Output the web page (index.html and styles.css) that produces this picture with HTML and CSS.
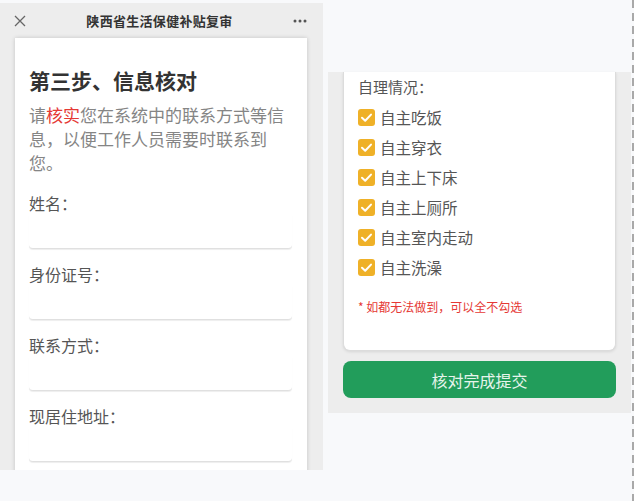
FILE: index.html
```html
<!DOCTYPE html>
<html lang="zh-CN">

<head>
    <meta charset="UTF-8">
    <meta name="viewport" content="width=device-width, initial-scale=1.0">
    <title>信息核对</title>
    <link rel="stylesheet" href="styles.css">
</head>

<body>
    <div class="screens">
        <!-- step 3: contact info -->
        <div class="phone phone-left">
            <div class="nav-bar">
                <svg class="nav-close" width="12" height="12" viewBox="0 0 12 12">
                    <path d="M1 1 L11 11 M11 1 L1 11" stroke="#666" stroke-width="1.3" fill="none" />
                </svg>
                <span class="nav-title">陕西省生活保健补贴复审</span>
                <svg class="nav-more" width="14" height="4" viewBox="0 0 14 4">
                    <circle cx="2" cy="2" r="1.5" fill="#555" />
                    <circle cx="7" cy="2" r="1.5" fill="#555" />
                    <circle cx="12" cy="2" r="1.5" fill="#555" />
                </svg>
            </div>
            <div class="card">
                <h2 class="step-title">第三步、信息核对</h2>
                <p class="step-desc">请<span class="hl">核实</span>您在系统中的联系方式等信息，以便工作人员需要时联系到您。</p>

                <form id="contactForm">
                    <label for="userName">姓名：</label>
                    <input type="text" id="userName" name="userName">

                    <label for="idNumber">身份证号：</label>
                    <input type="text" id="idNumber" name="idNumber">

                    <label for="phone">联系方式：</label>
                    <input type="text" id="phone" name="phone">

                    <label for="address">现居住地址：</label>
                    <input type="text" id="address" name="address">
                </form>
            </div>
        </div>

        <!-- self care + submit -->
        <div class="phone phone-right">
            <div class="card card-check">
                <div class="check-title">自理情况：</div>
                <div class="check-row"><span class="box"><svg width="17" height="17" viewBox="0 0 17 17"><path d="M4 8.8 L7.2 11.8 L13 5.6" stroke="#fff" stroke-width="2" fill="none" stroke-linecap="round" stroke-linejoin="round" /></svg></span>自主吃饭</div>
                <div class="check-row"><span class="box"><svg width="17" height="17" viewBox="0 0 17 17"><path d="M4 8.8 L7.2 11.8 L13 5.6" stroke="#fff" stroke-width="2" fill="none" stroke-linecap="round" stroke-linejoin="round" /></svg></span>自主穿衣</div>
                <div class="check-row"><span class="box"><svg width="17" height="17" viewBox="0 0 17 17"><path d="M4 8.8 L7.2 11.8 L13 5.6" stroke="#fff" stroke-width="2" fill="none" stroke-linecap="round" stroke-linejoin="round" /></svg></span>自主上下床</div>
                <div class="check-row"><span class="box"><svg width="17" height="17" viewBox="0 0 17 17"><path d="M4 8.8 L7.2 11.8 L13 5.6" stroke="#fff" stroke-width="2" fill="none" stroke-linecap="round" stroke-linejoin="round" /></svg></span>自主上厕所</div>
                <div class="check-row"><span class="box"><svg width="17" height="17" viewBox="0 0 17 17"><path d="M4 8.8 L7.2 11.8 L13 5.6" stroke="#fff" stroke-width="2" fill="none" stroke-linecap="round" stroke-linejoin="round" /></svg></span>自主室内走动</div>
                <div class="check-row"><span class="box"><svg width="17" height="17" viewBox="0 0 17 17"><path d="M4 8.8 L7.2 11.8 L13 5.6" stroke="#fff" stroke-width="2" fill="none" stroke-linecap="round" stroke-linejoin="round" /></svg></span>自主洗澡</div>
                <p class="check-note">* 如都无法做到，可以全不勾选</p>
            </div>
            <button class="submit-btn" type="button">核对完成提交</button>
        </div>

        <div class="dash-line"></div>
    </div>
</body>

</html>
```

FILE: styles.css
```css
body {
    margin: 0;
    font-family: "Noto Sans CJK SC", "Noto Sans", sans-serif;
    background-color: #f8f9fb;
    height: 501px;
    overflow: hidden;
}

.screens {
    display: flex;
    align-items: flex-start;
}

.phone {
    background-color: #ededed;
    box-sizing: border-box;
}

.phone-left {
    width: 323px;
    height: 467px;
    margin-top: 3px;
    display: flex;
    flex-direction: column;
    overflow: hidden;
}

/* top bar */
.nav-bar {
    height: 35px;
    flex-shrink: 0;
    display: flex;
    align-items: center;
    justify-content: space-between;
    padding: 0 16px 0 14px;
}

.nav-title {
    font-size: 13px;
    font-weight: 600;
    color: #333;
    letter-spacing: 0.3px;
}

.nav-more {
    margin-top: 1px;
}

.card {
    background-color: #fff;
    margin: 0 16px 0 15px;
    padding: 27px 15px 0 14px;
    flex: 1;
    box-shadow: 0 0 4px rgba(0, 0, 0, 0.18);
}

.step-title {
    margin: 0;
    font-size: 21px;
    line-height: 30px;
    font-weight: bold;
    color: #333;
}

.step-desc {
    margin: 8px 0 0;
    font-size: 17px;
    line-height: 24px;
    color: #858585;
}

.hl {
    color: #e53935;
}

#contactForm {
    margin-top: 17px;
}

label {
    display: block;
    font-size: 16px;
    line-height: 23px;
    color: #555;
}

input[type="text"] {
    display: block;
    width: 100%;
    box-sizing: border-box;
    height: 34px;
    margin: 0 0 14px;
    padding: 0;
    border: none;
    border-bottom: 1px solid #e0e0e0;
    border-radius: 0 0 4px 4px;
    box-shadow: 0 1px 1px rgba(0, 0, 0, 0.07);
    outline: none;
}

/* right screen */
.phone-right {
    width: 303px;
    margin: 72px 0 0 5px;
    padding: 0 15px 15px;
}

.card-check {
    margin: 0;
    padding: 0 14px 33px;
    border: 1px solid #dcdcdc;
    border-top: none;
    border-radius: 0 0 7px 7px;
    box-shadow: 0 1px 3px rgba(0, 0, 0, 0.1);
}

.check-title {
    font-size: 15px;
    line-height: 30px;
    color: #555;
}

.check-row {
    display: flex;
    align-items: center;
    gap: 5px;
    height: 30px;
    font-size: 15.5px;
    color: #555;
}

.box {
    width: 17px;
    height: 17px;
    border-radius: 3px;
    background-color: #efb128;
    display: flex;
}

.check-note {
    margin: 15px 0 0;
    font-size: 12px;
    line-height: 20px;
    color: #e53935;
}

.submit-btn {
    display: block;
    width: 100%;
    height: 37px;
    margin-top: 10px;
    border: none;
    border-radius: 8px;
    background-color: #229d5b;
    color: #e6f4eb;
    font-family: inherit;
    font-size: 16px;
    cursor: pointer;
}

.dash-line {
    width: 2px;
    height: 501px;
    margin-left: 1px;
    background: repeating-linear-gradient(to bottom, #a9a9a9 0 8px, transparent 8px 13px);
}
```
